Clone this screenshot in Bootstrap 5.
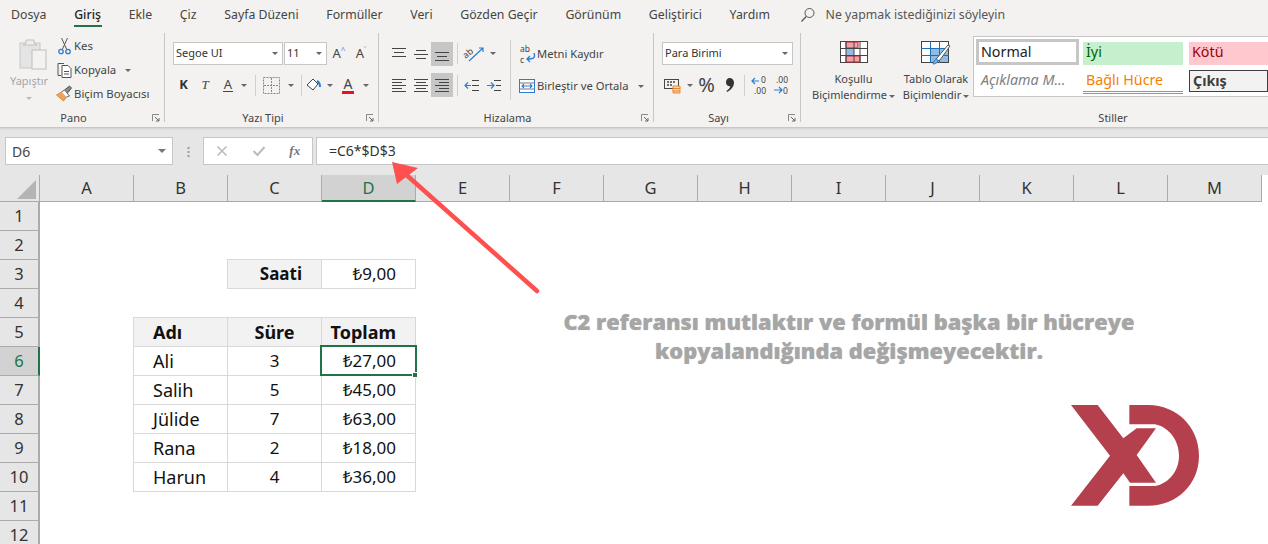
<!DOCTYPE html>
<html lang="tr">
<head>
<meta charset="utf-8">
<title>Excel</title>
<link href="https://cdn.jsdelivr.net/npm/bootstrap@5.3.0/dist/css/bootstrap.min.css" rel="stylesheet">
<style>
html,body{margin:0;height:544px;overflow:hidden;background:#fff}
body{font-family:"Noto Sans","Open Sans",sans-serif;font-size:11.5px;color:#444;position:relative;width:1268px}
svg{display:block;flex:none;overflow:visible}
.defs{position:absolute}
.rb{background:#f3f2f1;height:127px}
.tabs{height:30px;font-size:12.3px;color:#444;padding-left:11px}
.tabs span{margin-right:27.7px;position:relative;line-height:30px}
.tabs .on{color:#222;font-weight:500}
.tabs .on::after{content:"";position:absolute;left:0;right:-1px;top:25px;height:2px;background:#217346}
.tabs .ask{margin-left:2px;margin-right:10px}
.tabs .asktxt{margin:0;color:#555}
.grp{height:97px;position:relative;flex:none}
.grp::before{content:"";position:absolute;right:0;top:3px;bottom:5px;width:1px;background:#c8c6c4}
.g1{width:165px}.g2{width:214px;padding-left:8px}.g3{width:275px}.g4{width:147px;padding-left:8px}.g5{width:467px}
.g5::before{display:none}
.glabel{position:absolute;left:0;right:0;top:80px;text-align:center;line-height:15px;font-size:11px;color:#444;padding-right:18px}
.gls{padding-left:157px;padding-right:0}
.launch{position:absolute;right:5px;top:84px}
.pastecol{width:55px;padding-top:8px}
.pastecol svg{margin-left:19px}
.pastetxt{color:#a6a6a6;margin-top:3px;padding-left:10px;line-height:16px;font-size:11px}
.carg{width:0;height:0;border:3px solid transparent;border-top:3px solid #666;border-bottom:0;flex:none}
.carl{border-top-color:#bbb;margin:8px 0 0 26px}
.clip{padding-top:4px}
.clip>div{height:24px;white-space:nowrap;font-size:11.4px}
.clip svg{width:19px;height:18px}
.ms9{margin-left:9px}
.tl1{height:23px;margin-top:12px}
.tl2{height:24px;margin-top:8px}
.pick{background:#fff;border:1px solid #c6c6c6;height:23px;font-size:11px;padding:0 4px 0 2px;color:#333;justify-content:space-between}
.pf{width:110px}.ps{width:43px;margin-left:1px}.pn{width:131px}
.sl{height:24px;flex:none;display:flex;align-items:center;justify-content:center;color:#444}
.sl.sel{background:#c6c6c6}
.w21{width:21px}.w22{width:22px}.w24{width:24px}.w8{width:8px}.w17{width:17px}.w28{width:28px}.w30{width:30px}.w31{width:31px}
.vs{width:1px;background:#d2d0ce;height:21px;flex:none}
.ms1{margin-left:1px}.ms2{margin-left:2px}.ms3{margin-left:3px}.ms4{margin-left:4px}.ms6{margin-left:6px}.ms7{margin-left:7px}
.bigk{font-weight:700;font-size:13px;color:#333}
.bigt{font-style:italic;font-size:13px;font-family:"Liberation Serif",serif}
.und{font-size:13px;line-height:13px;border-bottom:1px solid #444;padding:0 1px}
.redk{font-size:14px;line-height:14px;border-bottom:3px solid #e81123;padding:0 2px}
.a1{font-size:13px}.a1 sup{color:#5b87c4;font-size:8px;top:-.5em}
.al{padding-left:9px}
.vtall{width:1px;background:#d2d0ce;height:60px;margin:10px 0 0 5px;flex:none}
.rt{padding-left:8px;padding-top:12px;font-size:11.2px}
.rt>div{height:24px;white-space:nowrap}
.rt>div+div{margin-top:8px}
.pct{font-size:20px;color:#444}
.cmd{flex:none;text-align:center;line-height:16px;font-size:11px;color:#444;padding-top:11px}
.cmd svg{margin:0 auto 8px}
.cmd1{width:87px;margin-left:9px}.cmd2{width:78px}
.cmd2 svg{margin-bottom:6px}
.crt{display:inline-block;vertical-align:middle;margin-left:2px}
.gal{flex:1;height:61px;margin:6px 0 0 -2px;background:#fff;border:1px solid #c6c6c6;border-right:0;padding:2px 0 0 2px;display:grid;grid-template-columns:103px 102px 1fr;column-gap:4px;grid-template-rows:26px 31px;font-size:14.3px;line-height:20px}
.gal>div{white-space:nowrap;overflow:hidden;padding-left:3px;display:flex;align-items:center}
.gal>.gn{border:3px solid #c6c6c6;color:#222;padding-left:2px}
.gi{background:#c6efce;color:#006100;margin:3px 2px 0 0;padding-bottom:4px}
.gk{background:#ffc7ce;color:#9c0006;margin:3px 0 0 0;padding-bottom:4px}
.gal>.ga{font-style:italic;color:#7f7f7f;padding:0 0 1px 5px}
.gb{color:#fa7d00;border-bottom:3px double #fa7d00;margin:3px 2px 2px 0}
.gc{font-weight:700;color:#3f3f3f;border:1px solid #3f3f3f;background:#f2f2f2;margin:5px 0 4px}
.fb{height:48px;background:#e6e6e6;padding-top:10px;box-shadow:inset 0 4px 3px -3px #b8b8b8}
.box{background:#fff;border:1px solid #c6c6c6;height:28px;flex:none}
.name{width:168px;margin-left:5px;font-size:14px;padding:0 6px;color:#444;justify-content:space-between}
.nmcar{border-width:4px;border-bottom:0;border-top-color:#777}
.dots{width:30px;flex:none}
.fx{width:110px;justify-content:space-around;padding:0 6px;color:#777;font-size:13px;font-style:italic}
.fxt{margin-left:12px;font-family:"Liberation Serif",serif;font-weight:700}
.chk{margin-left:12px}
.ftxt{margin-left:3px;flex:1;border-right:0;padding:0 0 2px 12px;font-size:14px;color:#333}
.sheet{display:grid;grid-template-columns:40px repeat(13,94px);grid-template-rows:27px;grid-auto-rows:29px;font-size:17px;color:#111;line-height:28px}
.sheet>.hc{background:#e6e6e6;border-right:1px solid #ababab;border-bottom:1px solid #ababab;text-align:center;line-height:26px;color:#333;font-size:16.5px}
.sheet>.corner{position:relative}
.corner svg{position:absolute;left:17px;top:5px}
.sheet>.act{background:#d2d2d2;color:#217346;border-bottom:2px solid #217346}
.rh{grid-column:1;background:#e6e6e6;border-right:2px solid #ababab;border-bottom:1px solid #ababab;text-align:center;color:#333;font-size:16.5px}
.sheet>.rh.act{background:#d2d2d2;color:#217346;border-right:2px solid #217346;border-bottom:1px solid #ababab}
.cB{grid-column:3}.cC{grid-column:4}.cD{grid-column:5}
.ce{border-right:1px solid #d9d9d9;border-bottom:1px solid #d9d9d9;white-space:nowrap}
.ltx{padding-left:19px}.rtx{text-align:right;padding-right:19px}.ctx{text-align:center}
.t18{font-size:18px}
.hd{background:#f2f2f2;font-weight:700}
.edL{box-shadow:-1px 0 0 #d9d9d9}
.edT{box-shadow:0 -1px 0 #d9d9d9}
.edLT{box-shadow:-1px 0 0 #d9d9d9,0 -1px 0 #d9d9d9,-1px -1px 0 #d9d9d9}
.curr{position:relative}
.curr::before{content:"";position:absolute;left:-2px;top:-2px;right:-2px;bottom:-1px;border:2px solid #217346}
.curr::after{content:"";position:absolute;right:-3px;bottom:-3px;background:#217346;border:1px solid #fff;box-sizing:content-box;width:4px;height:4px}
.arrow{position:absolute;left:380px;top:150px}
.note{position:absolute;left:519px;top:307px;width:660px;text-align:center;color:#a6a6a6;font-family:"Open Sans",sans-serif;font-weight:800;font-size:21.8px;line-height:29px;white-space:nowrap;text-shadow:0 0 1px #bbb}
.logo{position:absolute;left:1040px;top:390px}
</style>
</head>
<body>
<svg class="defs" width="0" height="0">
<symbol id="l1" viewBox="0 0 16 16"><path d="M1 2.5h14M3 6.5h10M1 10.5h14" stroke="#444" fill="none"/></symbol>
<symbol id="l2" viewBox="0 0 16 16"><path d="M3 4.5h10M1 8.5h14M3 12.5h10" stroke="#444" fill="none"/></symbol>
<symbol id="l3" viewBox="0 0 16 16"><path d="M1 6.5h14M3 10.5h10M1 14.5h14" stroke="#444" fill="none"/></symbol>
<symbol id="a1" viewBox="0 0 16 16"><path d="M1 2.5h14M1 5.5h10M1 8.5h14M1 11.5h10M1 14.5h14" stroke="#444" fill="none"/></symbol>
<symbol id="a2" viewBox="0 0 16 16"><path d="M1 2.5h14M3 5.5h10M1 8.5h14M3 11.5h10M1 14.5h14" stroke="#444" fill="none"/></symbol>
<symbol id="a3" viewBox="0 0 16 16"><path d="M1 2.5h14M5 5.5h10M1 8.5h14M5 11.5h10M1 14.5h14" stroke="#444" fill="none"/></symbol>
<symbol id="lnc" viewBox="0 0 8 8"><path d="M.5 7V.5H7" fill="none" stroke="#888"/><path d="M3 3l4 4M7 4v3H4" fill="none" stroke="#666"/></symbol>
</svg>

<div class="rb">
  <div class="tabs d-flex align-items-center">
    <span>Dosya</span><span class="on">Giriş</span><span>Ekle</span><span>Çiz</span><span>Sayfa Düzeni</span><span>Formüller</span><span>Veri</span><span>Gözden Geçir</span><span>Görünüm</span><span>Geliştirici</span><span>Yardım</span>
    <span class="ask"><svg width="16" height="16" viewBox="0 0 16 16"><circle cx="9.5" cy="6" r="4.5" fill="none" stroke="#555"/><path d="M6.2 9.5L1.5 14.5" stroke="#555" stroke-width="1.2"/></svg></span>
    <span class="asktxt">Ne yapmak istediğinizi söyleyin</span>
  </div>
  <div class="d-flex">
    <div class="grp g1 d-flex">
      <div class="pastecol">
        <svg width="28" height="32" viewBox="0 0 28 32"><rect x="1" y="5" width="20" height="25" fill="#e4e4e4" stroke="#c8c8c8"/><path d="M7 5V2h8v3l3 2H4z" fill="#eee" stroke="#c0c0c0"/><rect x="13" y="12" width="14" height="19" fill="#f3f2f1" stroke="#bdbdbd"/></svg>
        <div class="pastetxt">Yapıştır</div>
        <div class="carg carl"></div>
      </div>
      <div class="clip">
        <div class="d-flex align-items-center"><svg viewBox="0 0 16 18"><path d="M5 1l5 11M11 1L6 12" stroke="#555" fill="none"/><circle cx="4.5" cy="14.5" r="2.2" fill="none" stroke="#2b7cd3" stroke-width="1.3"/><circle cx="11.5" cy="14.5" r="2.2" fill="none" stroke="#2b7cd3" stroke-width="1.3"/></svg><span>Kes</span></div>
        <div class="d-flex align-items-center"><svg viewBox="0 0 16 18"><path d="M4.5 14.5H1.5V2.5h6" fill="none" stroke="#555"/><path d="M5.5 4.5h6l3 3v9h-9z" fill="#fff" stroke="#555"/><path d="M7.5 10.5h5M7.5 13h5" stroke="#555"/></svg><span>Kopyala</span><span class="carg ms9"></span></div>
        <div class="d-flex align-items-center"><svg viewBox="0 0 16 18"><path d="M0 10l7 6 3-4-5-5z" fill="#f0a35e" stroke="#e08a3c"/><path d="M5 7l3-2 5 6-3 1" fill="#fff" stroke="#666"/><path d="M8 5l5-4 2 2-4 5" fill="#888" stroke="#555"/></svg><span>Biçim Boyacısı</span></div>
      </div>
      <div class="glabel">Pano</div>
      <svg class="launch" width="8" height="8"><use href="#lnc"/></svg>
    </div>

    <div class="grp g2">
      <div class="tl1 d-flex align-items-center">
        <div class="pick pf d-flex align-items-center"><span>Segoe UI</span><span class="carg"></span></div>
        <div class="pick ps d-flex align-items-center"><span>11</span><span class="carg"></span></div>
        <div class="sl a1 w22 ms1">A<sup>^</sup></div>
        <div class="sl a1 w22">A<sup>˅</sup></div>
      </div>
      <div class="tl2 d-flex align-items-center">
        <div class="sl w21 bigk">K</div>
        <div class="sl w22 bigt">T</div>
        <div class="sl w24"><span class="und">A</span></div>
        <div class="sl w8"><span class="carg"></span></div>
        <div class="vs ms7"></div>
        <div class="sl w31"><svg width="17" height="17" viewBox="0 0 17 17"><path d="M.5.5h16v16H.5z" fill="none" stroke="#888" stroke-dasharray="2 1"/><path d="M8.5 1v15M1 8.5h15" stroke="#888" stroke-dasharray="2 1"/></svg></div>
        <div class="sl w8"><span class="carg"></span></div>
        <div class="vs ms6"></div>
        <div class="sl w24"><svg width="16" height="16" viewBox="0 0 16 16"><path d="M1 8l6-6 5 5-5 6z" fill="#fff" stroke="#444"/><path d="M11 4c2 1 3 3 3 6" fill="none" stroke="#2b7cd3" stroke-width="2"/></svg></div>
        <div class="sl w8"><span class="carg"></span></div>
        <div class="sl w28"><span class="redk">A</span></div>
        <div class="sl w8"><span class="carg"></span></div>
      </div>
      <div class="glabel">Yazı Tipi</div>
      <svg class="launch" width="8" height="8"><use href="#lnc"/></svg>
    </div>

    <div class="grp g3 d-flex">
      <div class="al">
        <div class="tl1 d-flex align-items-center">
          <div class="sl w22"><svg width="16" height="16"><use href="#l1"/></svg></div>
          <div class="sl w21"><svg width="16" height="16"><use href="#l2"/></svg></div>
          <div class="sl w22 sel"><svg width="16" height="16"><use href="#l3"/></svg></div>
          <div class="vs ms4"></div>
          <div class="sl w28 ms3"><svg width="22" height="18" viewBox="0 0 22 18"><path d="M5 16L19 3M15 3h4v4" fill="none" stroke="#2b7cd3" stroke-width="1.2"/><text x="0" y="11" font-size="9" fill="#444" transform="rotate(-40 5 10)" font-family="Noto Sans">ab</text></svg></div>
          <div class="sl w8"><span class="carg"></span></div>
        </div>
        <div class="tl2 d-flex align-items-center">
          <div class="sl w22"><svg width="16" height="16"><use href="#a1"/></svg></div>
          <div class="sl w21"><svg width="16" height="16"><use href="#a2"/></svg></div>
          <div class="sl w22 sel"><svg width="16" height="16"><use href="#a3"/></svg></div>
          <div class="vs ms4"></div>
          <div class="sl w22 ms3"><svg width="16" height="16" viewBox="0 0 16 16"><path d="M8 3.5h7M8 8.5h7M8 13.5h7" stroke="#444"/><path d="M7 8.5H1M4 5.5l-3 3 3 3" fill="none" stroke="#2b7cd3" stroke-width="1.2"/></svg></div>
          <div class="sl w22"><svg width="16" height="16" viewBox="0 0 16 16"><path d="M8 3.5h7M8 13.5h7M10 8.5h5" stroke="#444"/><path d="M1 8.5h7M5 5.5l3 3-3 3" fill="none" stroke="#2b7cd3" stroke-width="1.2"/></svg></div>
        </div>
      </div>
      <div class="vtall"></div>
      <div class="rt">
        <div class="d-flex align-items-center"><svg width="18" height="20" viewBox="0 0 18 20"><text x="1" y="8" font-size="8.5" fill="#444" font-family="Noto Sans">ab</text><text x="1" y="19" font-size="8.5" fill="#444" font-family="Noto Sans">c</text><path d="M15 9c2 5-1 6-7 6M11 12l-3 3 3 3" fill="none" stroke="#2b7cd3" stroke-width="1.3"/></svg><span>Metni Kaydır</span></div>
        <div class="d-flex align-items-center"><svg width="18" height="16" viewBox="0 0 18 16"><rect x=".5" y="1.5" width="15" height="13" fill="#fff" stroke="#2b7cd3"/><path d="M.5 5h15M.5 11h15" stroke="#777"/><path d="M3 8h10M5 6L3 8l2 2M11 6l2 2-2 2" fill="none" stroke="#2b7cd3" stroke-width="1.1"/></svg><span>Birleştir ve Ortala</span><span class="carg ms9"></span></div>
      </div>
      <div class="glabel">Hizalama</div>
      <svg class="launch" width="8" height="8"><use href="#lnc"/></svg>
    </div>

    <div class="grp g4">
      <div class="tl1 d-flex align-items-center"><div class="pick pn d-flex align-items-center"><span>Para Birimi</span><span class="carg"></span></div></div>
      <div class="tl2 d-flex align-items-center">
        <div class="sl w22"><svg width="18" height="18" viewBox="0 0 18 18"><rect x=".5" y="3.5" width="14" height="9" fill="none" stroke="#444"/><path d="M3 6h9M3 9h5" stroke="#444" stroke-width="1.6" stroke-dasharray="2 1"/><path d="M9 10h7v7H9z" fill="#fbd3ad" stroke="#e8872d"/><path d="M9 12.5h7M9 15h7" stroke="#e8872d"/></svg></div>
        <div class="sl w8 ms2"><span class="carg"></span></div>
        <div class="sl w17 ms4 pct">%</div>
        <div class="sl w24 ms3"><svg width="8" height="14" viewBox="0 0 8 14"><path d="M3.5 0C6 0 8 1.8 8 4.5 8 8.5 5 12 1 14L.5 13C2.5 11.5 4 10 4.3 8.3 2 8.6 0 7 0 4.3 0 1.8 1.5 0 3.5 0z" fill="#333"/></svg></div>
        <div class="vs ms2"></div>
        <div class="sl w22 ms3"><svg width="17" height="19" viewBox="0 0 17 19"><path d="M1 5h7M4 2L1 5l3 3" fill="none" stroke="#2b7cd3" stroke-width="1.2"/><text x="10" y="7" font-size="8.5" fill="#444" font-family="Noto Sans">0</text><text x="3" y="18" font-size="8.5" fill="#444" font-family="Noto Sans">.00</text></svg></div>
        <div class="sl w22"><svg width="17" height="19" viewBox="0 0 17 19"><text x="3" y="7" font-size="8.5" fill="#444" font-family="Noto Sans">.00</text><path d="M1 14h8M6 11l3 3-3 3" fill="none" stroke="#2b7cd3" stroke-width="1.2"/><text x="10" y="18" font-size="8.5" fill="#444" font-family="Noto Sans">0</text></svg></div>
      </div>
      <div class="glabel">Sayı</div>
      <svg class="launch" width="8" height="8"><use href="#lnc"/></svg>
    </div>

    <div class="grp g5 d-flex">
      <div class="cmd cmd1">
        <svg width="28" height="22" viewBox="0 0 28 22"><rect x=".5" y=".5" width="27" height="21" fill="#fff" stroke="#444"/><rect x="6" y="1" width="12" height="6" fill="#f4a0a8" stroke="#c0282d"/><rect x="6" y="8" width="8" height="6" fill="#8fbce6"/><rect x="6" y="15" width="14" height="6" fill="#f4a0a8" stroke="#c0282d"/><path d="M0 7.5h28M0 14.5h28M6 0v22M14 0v22M20 0v22" stroke="#444" fill="none"/></svg>
        <div>Koşullu</div><div class="text-nowrap">Biçimlendirme<span class="carg crt"></span></div>
      </div>
      <div class="cmd cmd2">
        <svg width="30" height="24" viewBox="0 0 30 24"><rect x=".5" y=".5" width="27" height="21" fill="#fff" stroke="#444"/><rect x="10" y="7" width="17" height="14" fill="#8fbce6"/><path d="M0 7.5h28M0 14.5h28M9.5 0v22M18.5 0v22" stroke="#1f6fb5" fill="none"/><path d="M13 21l3-4 11-13 2 1-10 14z" fill="#fff" stroke="#555"/><path d="M12 23c2 0 5-1 5-4l-2-1c-2 1-2 3-3 5z" fill="#7fb2e0" stroke="#2b7cd3"/></svg>
        <div class="text-nowrap">Tablo Olarak</div><div class="text-nowrap">Biçimlendir<span class="carg crt"></span></div>
      </div>
      <div class="gal">
        <div class="gn">Normal</div><div class="gi">İyi</div><div class="gk">Kötü</div>
        <div class="ga">Açıklama M...</div><div class="gb">Bağlı Hücre</div><div class="gc">Çıkış</div>
      </div>
      <div class="glabel gls">Stiller</div>
    </div>
  </div>
</div>

<div class="fb d-flex align-items-start">
  <div class="box name d-flex align-items-center"><span>D6</span><span class="carg nmcar"></span></div>
  <div class="dots d-flex justify-content-center"><svg width="3" height="28" viewBox="0 0 3 28"><path d="M1.5 10v2M1.5 14v2M1.5 18v2" stroke="#999" stroke-width="2"/></svg></div>
  <div class="box fx d-flex align-items-center">
    <svg width="12" height="12" viewBox="0 0 12 12"><path d="M1.5 1.5l9 9M10.5 1.5l-9 9" stroke="#bbb" stroke-width="1.6"/></svg>
    <svg class="chk" width="14" height="12" viewBox="0 0 14 12"><path d="M1.5 6l4 4 7-8" fill="none" stroke="#bbb" stroke-width="2"/></svg>
    <span class="fxt">fx</span>
  </div>
  <div class="box ftxt d-flex align-items-center"><span>=C6*$D$3</span></div>
</div>

<div class="sheet">
  <div class="hc corner"><svg width="20" height="19" viewBox="0 0 20 19"><path d="M19 0v19H0z" fill="#b4b4b4"/></svg></div>
  <div class="hc">A</div><div class="hc">B</div><div class="hc">C</div><div class="hc act">D</div><div class="hc">E</div><div class="hc">F</div><div class="hc">G</div><div class="hc">H</div><div class="hc">I</div><div class="hc">J</div><div class="hc">K</div><div class="hc">L</div><div class="hc">M</div>
  <div class="rh">1</div>
  <div class="rh">2</div>
  <div class="rh">3</div><div class="ce cC hd rtx edLT">Saati</div><div class="ce cD rtx edT">₺9,00</div>
  <div class="rh">4</div>
  <div class="rh">5</div><div class="ce cB hd ltx edLT t18">Adı</div><div class="ce cC hd ctx edT t18">Süre</div><div class="ce cD hd rtx edT t18">Toplam</div>
  <div class="rh act">6</div><div class="ce cB ltx edL t18">Ali</div><div class="ce cC ctx">3</div><div class="ce cD rtx curr">₺27,00</div>
  <div class="rh">7</div><div class="ce cB ltx edL t18">Salih</div><div class="ce cC ctx">5</div><div class="ce cD rtx">₺45,00</div>
  <div class="rh">8</div><div class="ce cB ltx edL t18">Jülide</div><div class="ce cC ctx">7</div><div class="ce cD rtx">₺63,00</div>
  <div class="rh">9</div><div class="ce cB ltx edL t18">Rana</div><div class="ce cC ctx">2</div><div class="ce cD rtx">₺18,00</div>
  <div class="rh">10</div><div class="ce cB ltx edL t18">Harun</div><div class="ce cC ctx">4</div><div class="ce cD rtx">₺36,00</div>
  <div class="rh">11</div>
  <div class="rh">12</div>
</div>

<svg class="arrow" width="170" height="150" viewBox="380 150 170 150"><path d="M537 291L402 171" stroke="#ff5050" stroke-width="4.5" stroke-linecap="round"/><path d="M392 162l26 6-21 16z" fill="#ff5050"/></svg>
<div class="note">C2 referansı mutlaktır ve formül başka bir hücreye<br>kopyalandığında değişmeyecektir.</div>
<svg class="logo" width="180" height="130" viewBox="0 0 540 390"><path fill="#b5404d" d="M93 45h80l77 100 40-30h58l-58 80 58 83h-78l-20-28-77 97H93l117-150zM268 45h57c85 0 152 66 152 152s-67 150-152 150h-57v-59h77c42-8 72-46 72-91s-30-86-72-94h-77z"/></svg>
<script src="https://cdn.jsdelivr.net/npm/bootstrap@5.3.0/dist/js/bootstrap.bundle.min.js"></script>
</body>
</html>
